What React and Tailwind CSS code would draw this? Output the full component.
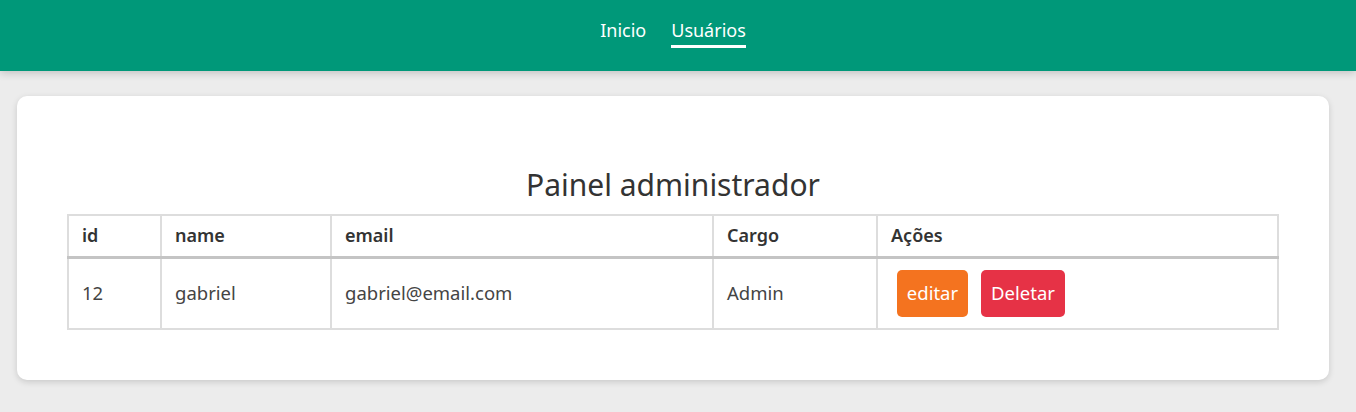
export default function App() {
  const font = { fontFamily: '"Noto Sans", "Open Sans", sans-serif' };
  return (
    <div className="min-h-[412px] bg-[#ececec]" style={font}>
      <nav className="h-[71px] bg-[#009879] shadow-[0_2px_8px_rgba(0,0,0,0.18)] flex items-center justify-center gap-[25px] pr-[10px] pb-[5px]">
        <a className="text-white text-[18px] leading-[24px] pb-[3px] border-b-[3px] border-transparent">Inicio</a>
        <a className="text-white text-[18px] leading-[24px] pb-[3px] border-b-[3px] border-white">Usuários</a>
      </nav>
      <div className="pt-[25px] pl-[17px]">
        <div className="w-[1312px] h-[284px] bg-white rounded-[10px] shadow-[0_2px_6px_rgba(0,0,0,0.15)] px-[50px] pt-[62px]">
          <h1 className="text-center text-[30px] leading-[54px] text-[#333] mb-[2px]">Painel administrador</h1>
          <table className="w-full border-collapse text-[#444] text-[18.5px]">
            <thead>
              <tr className="h-[42px] border-b-[3px] border-[#c4c4c4] text-[#333] text-[18px]">
                <th className="w-[93px] border-2 border-[#ddd] border-b-0 text-left font-semibold px-[13px]">id</th>
                <th className="w-[170px] border-2 border-[#ddd] border-b-0 text-left font-semibold px-[13px]">name</th>
                <th className="w-[382px] border-2 border-[#ddd] border-b-0 text-left font-semibold px-[13px]">email</th>
                <th className="w-[164px] border-2 border-[#ddd] border-b-0 text-left font-semibold px-[13px]">Cargo</th>
                <th className="border-2 border-[#ddd] border-b-0 text-left font-semibold px-[13px]">Ações</th>
              </tr>
            </thead>
            <tbody>
              <tr className="h-[72px]">
                <td className="border-2 border-[#ddd] border-t-0 px-[13px]">12</td>
                <td className="border-2 border-[#ddd] border-t-0 px-[13px]">gabriel</td>
                <td className="border-2 border-[#ddd] border-t-0 px-[13px]">gabriel@email.com</td>
                <td className="border-2 border-[#ddd] border-t-0 px-[13px]">Admin</td>
                <td className="border-2 border-[#ddd] border-t-0 px-[19px]">
                  <div className="flex gap-[13px]">
                    <button className="h-[47px] w-[71px] rounded-[5px] bg-[#f4731f] text-white text-[18.5px]">editar</button>
                    <button className="h-[47px] w-[84px] rounded-[5px] bg-[#e63246] text-white text-[18.5px]">Deletar</button>
                  </div>
                </td>
              </tr>
            </tbody>
          </table>
        </div>
      </div>
    </div>
  );
}
